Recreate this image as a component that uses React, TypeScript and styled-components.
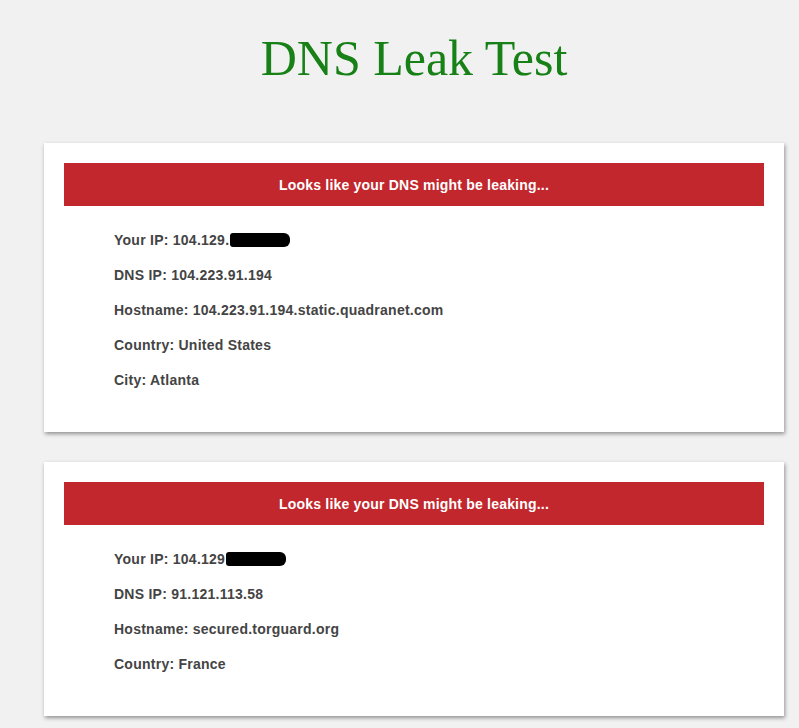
import styled, { createGlobalStyle } from 'styled-components';

interface Result {
  ip: string;
  dnsIp: string;
  hostname: string;
  country: string;
  city?: string;
}

const results: Result[] = [
  {
    ip: '104.129.',
    dnsIp: '104.223.91.194',
    hostname: '104.223.91.194.static.quadranet.com',
    country: 'United States',
    city: 'Atlanta',
  },
  {
    ip: '104.129',
    dnsIp: '91.121.113.58',
    hostname: 'secured.torguard.org',
    country: 'France',
  },
];

const GlobalStyle = createGlobalStyle`
  html, body {
    margin: 0;
    padding: 0;
    background: #f1f1f1;
  }
`;

export default function App() {
  return (
    <>
      <GlobalStyle />
      <Page>
        <Title>DNS Leak Test</Title>
        <Cards>
          {results.map((r, i) => (
            <Card key={i}>
              <Banner>Looks like your DNS might be leaking...</Banner>
              <Rows>
                <Row>
                  Your IP: {r.ip}
                  <Redacted />
                </Row>
                <Row>DNS IP: {r.dnsIp}</Row>
                <Row>Hostname: {r.hostname}</Row>
                <Row>Country: {r.country}</Row>
                {r.city && <Row>City: {r.city}</Row>}
              </Rows>
            </Card>
          ))}
        </Cards>
      </Page>
    </>
  );
}

const Page = styled.div`
  width: 740px;
  margin-left: 44px;
  padding-bottom: 30px;
`;

const Title = styled.h1`
  margin: 0;
  padding: 28px 0 0;
  height: 143px;
  box-sizing: border-box;
  text-align: center;
  font-family: 'Liberation Serif', 'Times New Roman', serif;
  font-weight: 400;
  font-size: 50px;
  line-height: 60px;
  color: #178017;
`;

const Cards = styled.div`
  display: flex;
  flex-direction: column;
  gap: 30px;
`;

const Card = styled.div`
  background: #fff;
  padding: 20px;
  box-shadow: 1px 2px 4px rgba(0, 0, 0, 0.4);
`;

const Banner = styled.div`
  background: #c1272d;
  color: #fff;
  height: 43px;
  display: flex;
  align-items: center;
  justify-content: center;
  font-family: 'Liberation Sans', Arial, sans-serif;
  font-weight: 700;
  font-size: 14px;
  letter-spacing: 0.2px;
`;

const Rows = styled.div`
  display: flex;
  flex-direction: column;
  margin: 16px 0 15px;
  padding-left: 50px;
`;

const Row = styled.div`
  height: 35px;
  display: flex;
  align-items: center;
  font-family: 'Liberation Sans', Arial, sans-serif;
  font-weight: 700;
  font-size: 14px;
  letter-spacing: 0.25px;
  color: #444;
`;

const Redacted = styled.span`
  display: inline-block;
  width: 60px;
  height: 14px;
  background: #000;
  border-radius: 3px 6px 6px 3px;
  margin-left: 1px;
`;
